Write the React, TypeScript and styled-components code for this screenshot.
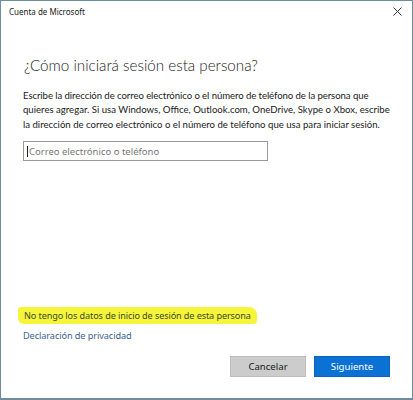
import React from "react";
import styled, { createGlobalStyle } from "styled-components";

const Global = createGlobalStyle`
  html, body { margin: 0; padding: 0; background: #ffffff; }
  body { font-family: "Noto Sans", "Liberation Sans", sans-serif; }
`;

const Window = styled.div`
  box-sizing: border-box;
  width: 413px;
  height: 400px;
  border: 1px solid #6f8c9c;
  border-bottom-width: 2px;
  background: #ffffff;
  display: flex;
  flex-direction: column;
`;

const TitleBar = styled.div`
  height: 21px;
  display: flex;
  align-items: center;
  justify-content: space-between;
  padding: 0 9px 0 8px;
`;

const TitleText = styled.span`
  font-size: 8px;
  color: #1a1a1a;
`;

const CloseButton = styled.span`
  display: flex;
  align-items: center;
  justify-content: center;
  width: 12px;
  height: 12px;
`;

const Body = styled.div`
  flex: 1;
  display: flex;
  flex-direction: column;
  padding: 31px 22px 0 22px;
`;

const Heading = styled.h1`
  margin: 0 0 0 1px;
  font-family: "Lato", "Open Sans", sans-serif;
  font-weight: 300;
  font-size: 15.2px;
  line-height: 24px;
  color: #1a1a1a;
`;

const Paragraph = styled.p`
  margin: 12px 0 0 0;
  font-family: "Lato", "Noto Sans", sans-serif;
  font-size: 9.6px;
  line-height: 14.4px;
  color: #1a1a1a;
  white-space: nowrap;
`;

const Line = styled.span<{ $track?: number }>`
  display: block;
  letter-spacing: ${(p) => p.$track ?? 0}px;
`;

const Field = styled.div`
  margin-top: 9px;
  box-sizing: border-box;
  width: 245px;
  height: 20px;
  border: 1.5px solid #9a9a9a;
  display: flex;
  align-items: center;
  padding-left: 3px;
  font-size: 9.5px;
  color: #777777;
`;

const Caret = styled.span`
  display: inline-block;
  width: 1px;
  height: 11px;
  background: #222;
  margin-right: 1px;
`;

const Spacer = styled.div`
  flex: 1;
`;

const HighlightLink = styled.a`
  align-self: flex-start;
  margin-left: -5px;
  padding: 3px 6px 2px 6px;
  background: #f6f53a;
  border-radius: 3px 8px 4px 6px;
  font-size: 9.1px;
  line-height: 12px;
  color: #3b4a2a;
  text-decoration: none;
  letter-spacing: -0.1px;
`;

const PlainLink = styled.a`
  margin-top: 5px;
  font-size: 9.2px;
  line-height: 13px;
  color: #3a6592;
  text-decoration: none;
  letter-spacing: -0.1px;
`;

const ButtonRow = styled.div`
  display: flex;
  justify-content: flex-end;
  gap: 8px;
  margin: 14px 0 0 0;
  padding-bottom: 21px;
`;

const Button = styled.button<{ $primary?: boolean }>`
  box-sizing: border-box;
  width: 76px;
  height: 21px;
  font-family: "Noto Sans", sans-serif;
  font-size: 9.6px;
  border: 1px solid ${(p) => (p.$primary ? "#0a64c0" : "#bdbdbd")};
  background: ${(p) => (p.$primary ? "#0c71d4" : "#cccccc")};
  color: ${(p) => (p.$primary ? "#ffffff" : "#1a1a1a")};
  padding: 0;
`;

export default function App() {
  return (
    <>
      <Global />
      <Window>
        <TitleBar>
          <TitleText>Cuenta de Microsoft</TitleText>
          <CloseButton>
            <svg width="9" height="9" viewBox="0 0 9 9">
              <path d="M0.5 0.5 L8.5 8.5 M8.5 0.5 L0.5 8.5" stroke="#333" strokeWidth="1" />
            </svg>
          </CloseButton>
        </TitleBar>
        <Body>
          <Heading>¿Cómo iniciará sesión esta persona?</Heading>
          <Paragraph>
            <Line $track={-0.08}>
              Escribe la dirección de correo electrónico o el número de teléfono de la persona que
            </Line>
            <Line>
              quieres agregar. Si usa Windows, Office, Outlook.com, OneDrive, Skype o Xbox, escribe
            </Line>
            <Line>
              la dirección de correo electrónico o el número de teléfono que usa para iniciar sesión.
            </Line>
          </Paragraph>
          <Field>
            <Caret />
            Correo electrónico o teléfono
          </Field>
          <Spacer />
          <HighlightLink href="#">No tengo los datos de inicio de sesión de esta persona</HighlightLink>
          <PlainLink href="#">Declaración de privacidad</PlainLink>
          <ButtonRow>
            <Button>Cancelar</Button>
            <Button $primary>Siguiente</Button>
          </ButtonRow>
        </Body>
      </Window>
    </>
  );
}
